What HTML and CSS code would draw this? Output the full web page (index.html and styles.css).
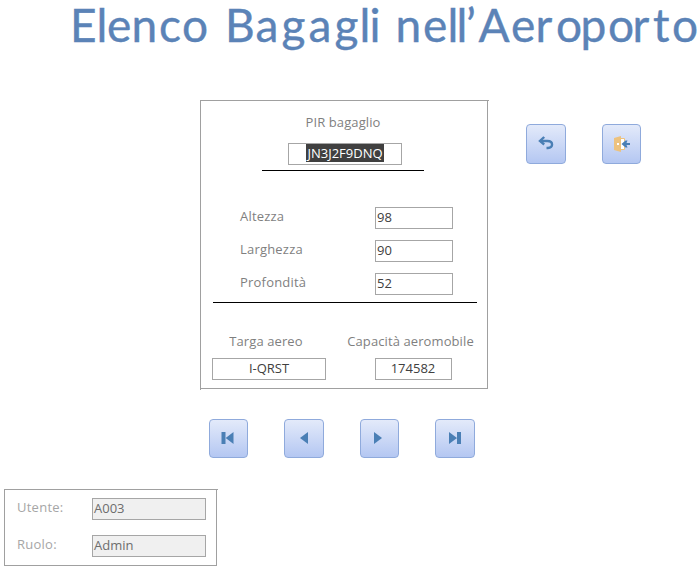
FILE: index.html
```html
<!DOCTYPE html>
<html lang="it">
<head>
<meta charset="utf-8">
<title>Elenco Bagagli nell'Aeroporto</title>
<link rel="stylesheet" href="styles.css">
</head>
<body>
<h1 class="title">
  <svg width="700" height="60" viewBox="0 0 700 60">
    <text y="42" x="70 96.500 107 131.500 159 182">Elenco</text>
    <text y="42" x="225 255.500 281.500 308.500 334.500 359.500 369.500">Bagagli</text>
    <text y="42" x="395.500 423 447.500 456.500 466 478.500 511 535.500 556 580.500 608 632.500 653 672">nell’Aeroporto</text>
  </svg>
</h1>
<main class="workspace">
  <section class="frame baggage">
    <div class="pir">
      <label class="label">PIR bagaglio</label>
      <div class="field center wide"><span class="selected">JN3J2F9DNQ</span></div>
    </div>
    <div class="sizes">
      <div class="row"><label class="label">Altezza</label><div class="field">98</div></div>
      <div class="row"><label class="label">Larghezza</label><div class="field">90</div></div>
      <div class="row"><label class="label">Profondità</label><div class="field">52</div></div>
    </div>
    <div class="aircraft">
      <div class="plate"><label class="label">Targa aereo</label><div class="field center wide">I-QRST</div></div>
      <div class="capacity"><label class="label">Capacità aeromobile</label><div class="field center">174582</div></div>
    </div>
  </section>
  <div class="actions">
    <button class="btn" aria-label="Indietro"><svg viewBox="0 0 16 16"><path class="stroke" d="M2 5h7.500c6 0 6 7 .5 7H8.500"/><path class="stroke" d="M6.200 1L2 5l4.200 3.500"/></svg></button>
    <button class="btn narrow" aria-label="Esci"><svg viewBox="0 0 16 16"><path class="door" d="M0 2l7-2v16l-7-2z"/><path class="doorway" d="M7 2.500h3.500v11H7"/><path class="knob" d="M3 7h2v2H3z"/><path class="gap" d="M10 5.500h2v5h-2z"/><path class="fill" d="M7.500 8L11.500 4.500H13.500L12.500 7H16v2h-3.500l1 2.500H11.500z"/></svg></button>
  </div>
</main>
<nav class="nav">
  <button class="btn narrow" aria-label="Primo"><svg viewBox="0 0 16 16"><path class="fill" d="M1.500 2h4v12h-4zM13.500 2v12L5.700 8z"/></svg></button>
  <button class="btn" aria-label="Precedente"><svg viewBox="0 0 16 16"><path class="fill" d="M12 2v12L4 8z"/></svg></button>
  <button class="btn narrow" aria-label="Successivo"><svg viewBox="0 0 16 16"><path class="fill" d="M3 2v12l8-6z"/></svg></button>
  <button class="btn" aria-label="Ultimo"><svg viewBox="0 0 16 16"><path class="fill" d="M2 2v12l8-6zM10 2h4v12h-4z"/></svg></button>
</nav>
<section class="frame user">
  <div class="row"><label class="label">Utente:</label><div class="field wide disabled">A003</div></div>
  <div class="row"><label class="label">Ruolo:</label><div class="field wide disabled">Admin</div></div>
</section>
</body>
</html>
```
FILE: styles.css
```css
* { box-sizing: border-box; }
body {
  margin: 0;
  background: #fff;
  color: #404040;
  font: 13px/20px "Open Sans", "Noto Sans", sans-serif;
}
.title { margin: 0; height: 100px; font-size: 46px; }
.title svg { display: block; overflow: visible; }
.title text {
  font: 400 46px Lato, sans-serif;
  fill: #5b83b7;
  stroke: #5b83b7;
  stroke-width: .4px;
}
.workspace { display: flex; padding-left: 200px; }
.frame {
  position: relative;
  border: 1px solid #a0a0a0;
}
/* rules overshoot the corners by a pixel */
.frame::before {
  content: "";
  position: absolute;
  top: -1px;
  right: -2px;
  width: 1px;
  height: 1px;
  background: #a0a0a0;
}
.frame::after {
  content: "";
  position: absolute;
  left: -1px;
  bottom: -2px;
  width: 1px;
  height: 1px;
  background: #a0a0a0;
}
.baggage { width: 288px; height: 289px; }
.label { color: #7f7f7f; white-space: nowrap; letter-spacing: .1px; }
.field {
  width: 78px;
  height: 22px;
  border: 1px solid #a6a6a6;
  padding-left: 1px;
  line-height: 19px;
  white-space: nowrap;
}
.wide { width: 114px; }
.center { padding: 0; text-align: center; }
.pir {
  width: 162px;
  height: 70px;
  margin-left: 61px;
  padding-top: 11px;
  border-bottom: 1px solid #000;
  display: flex;
  flex-direction: column;
  align-items: center;
}
.pir .field { margin: 11px 0 0 4px; }
.selected {
  display: block;
  width: 78px;
  height: 18px;
  margin: 0 auto;
  background: #404040;
  color: #fff;
}
.sizes {
  width: 264px;
  height: 132px;
  margin-left: 12px;
  padding: 36px 23px 0 27px;
  border-bottom: 1px solid #000;
  display: flex;
  flex-direction: column;
  gap: 11px;
}
.row { display: flex; justify-content: space-between; height: 22px; }
.row .label { line-height: 18px; }
.sizes .label { letter-spacing: .2px; }
.sizes .field { margin-right: 1px; }
.aircraft { display: flex; margin-left: 11px; padding-top: 28px; gap: 19px; }
.aircraft > div { display: flex; flex-direction: column; align-items: center; gap: 7px; }
.plate .label { margin-left: -6px; }
.capacity { width: 129px; }
.capacity .label { margin-left: 2px; }
.capacity .field { width: 77px; margin-left: 7px; }
.actions { display: flex; gap: 36px; padding: 24px 0 0 38px; }
.btn {
  width: 40px;
  height: 40px;
  padding: 0;
  display: flex;
  align-items: center;
  justify-content: center;
  border: 1px solid #8faadc;
  border-radius: 4px;
  background: linear-gradient(#e3eafa, #b4c7f2);
}
.btn svg { width: 16px; height: 16px; }
.narrow { width: 39px; }
.nav { display: flex; gap: 36px; margin: 30px 0 0 209px; }
.nav .btn { height: 39px; padding-bottom: 1px; }
.nav .narrow { padding-right: 1px; }
.fill { fill: #4a7fb5; }
.stroke { fill: none; stroke: #4a7fb5; stroke-width: 2.400; }
.door { fill: #edc27e; }
.doorway { fill: #fff; stroke: #edc27e; }
.knob { fill: #fff; }
.gap { fill: #d5dff7; }
.user {
  width: 213px;
  height: 77px;
  margin: 31px 0 0 4px;
  padding: 8px 10px 0 12px;
  display: flex;
  flex-direction: column;
  gap: 15px;
}
.user .label { color: #a6a6a6; letter-spacing: .25px; }
.disabled { background: #f0f0f0; color: #6d6d6d; }
```
